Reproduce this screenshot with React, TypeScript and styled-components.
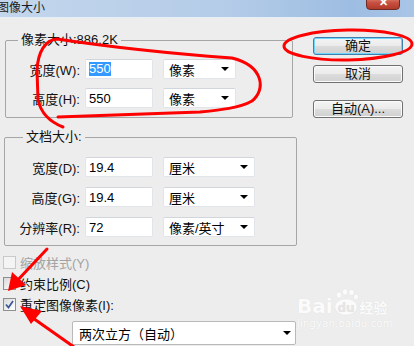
import React from "react";
import styled, { createGlobalStyle } from "styled-components";

const GlobalStyle = createGlobalStyle`
  html, body {
    margin: 0;
    padding: 0;
    background: #ededed;
  }
  body {
    font-family: "Liberation Sans", "Noto Sans CJK SC", sans-serif;
    font-size: 13px;
    color: #000;
  }
`;

const UI_FONT = `"Liberation Sans", "Noto Sans CJK SC", sans-serif`;

// Window frame
const Window = styled.div`
  position: relative;
  width: 414px;
  height: 346px;
  overflow: hidden;
  background: #ededed;
`;

const TitleBar = styled.div`
  position: relative;
  height: 17px;
  border-bottom: 1px solid #e6eef7;
  background: linear-gradient(to right, #c3d6ec 0%, #b4cce8 55%, #9dbde2 85%, #a9c5e6 100%);
  display: flex;
  align-items: center;
`;

const Title = styled.span`
  margin-left: -3px;
  font-family: ${UI_FONT};
  font-size: 12px;
  color: #1b1b1b;
  line-height: 17px;
`;

const CloseButton = styled.div`
  position: absolute;
  left: 366px;
  top: -6px;
  width: 34px;
  height: 16px;
  border: 1px solid #6e2a22;
  border-radius: 0 0 4px 4px;
  background: linear-gradient(#e9a294, #c8503f 55%, #b23a2a);
  color: #fff;
  font-size: 11px;
  font-weight: bold;
  display: flex;
  align-items: flex-end;
  justify-content: center;
  line-height: 11px;
  padding-bottom: 1px;
  box-sizing: border-box;
`;

const Body = styled.div`
  display: flex;
  flex-direction: row;
`;

const LeftCol = styled.div`
  width: 294px;
  padding-left: 3px;
  display: flex;
  flex-direction: column;
`;

const RightCol = styled.div`
  margin-left: 16px;
  padding-top: 19px;
  display: flex;
  flex-direction: column;
`;

// Group boxes
const Group = styled.div<{ $left: number; $width: number; $top: number; $padTop: number; $padBottom: number; $gap: number }>`
  position: relative;
  margin-left: ${({ $left }) => $left}px;
  margin-top: ${({ $top }) => $top}px;
  width: ${({ $width }) => $width}px;
  border: 1px solid #a6a6a6;
  border-radius: 2px;
  box-sizing: border-box;
  padding: ${({ $padTop }) => $padTop}px 0 ${({ $padBottom }) => $padBottom}px 0;
  display: flex;
  flex-direction: column;
  gap: ${({ $gap }) => $gap}px;
`;

const Legend = styled.span<{ $x: number }>`
  position: absolute;
  top: -9px;
  left: ${({ $x }) => $x}px;
  padding: 0 3px;
  background: #ededed;
  font-size: 13px;
  line-height: 16px;
  color: #111;
`;

const Row = styled.div`
  display: flex;
  align-items: center;
  height: 20px;
`;

const Label = styled.span<{ $width: number }>`
  width: ${({ $width }) => $width}px;
  text-align: right;
  margin-right: 5px;
  font-size: 13px;
  white-space: nowrap;
  color: #111;
`;

const TextBox = styled.div`
  width: 68px;
  height: 20px;
  box-sizing: border-box;
  background: #fff;
  border: 1px solid #e1e4e9;
  border-top-color: #d2d6dc;
  border-radius: 2px;
  padding-left: 3px;
  display: flex;
  align-items: center;
  font-size: 13px;
`;

const Selected = styled.span`
  background: #3399ff;
  color: #fff;
  line-height: 14px;
`;

const Select = styled.div<{ $width: number }>`
  margin-left: 10px;
  width: ${({ $width }) => $width}px;
  height: 20px;
  box-sizing: border-box;
  background: #fff;
  border: 1px solid #e1e4e9;
  border-top-color: #d2d6dc;
  border-radius: 2px;
  padding: 0 6px 0 5px;
  display: flex;
  align-items: center;
  justify-content: space-between;
  font-size: 13px;
`;

const Arrow = styled.span`
  width: 0;
  height: 0;
  border-left: 4px solid transparent;
  border-right: 4px solid transparent;
  border-top: 4px solid #000;
`;

// Checkboxes
const CheckRow = styled.div<{ $first?: boolean }>`
  display: flex;
  align-items: center;
  height: 21px;
  margin-top: ${({ $first }) => ($first ? 6 : 0)}px;
  gap: 4px;
`;

const Box = styled.div<{ $disabled?: boolean }>`
  width: 13px;
  height: 13px;
  box-sizing: border-box;
  border: 1px solid ${({ $disabled }) => ($disabled ? "#c9c9c9" : "#8e8f8f")};
  background: ${({ $disabled }) =>
    $disabled ? "#f4f4f4" : "linear-gradient(135deg, #d8d8d8, #f6f6f6 70%, #fff)"};
  display: flex;
  align-items: center;
  justify-content: center;
`;

const CheckText = styled.span<{ $disabled?: boolean }>`
  font-size: 13px;
  color: ${({ $disabled }) => ($disabled ? "#a3a3a3" : "#111")};
  white-space: nowrap;
`;

const ResampleSelect = styled(Select)`
  margin-left: 69px;
  margin-top: 6px;
  height: 24px;
  border-color: #b9b9b9;
  padding-left: 6px;
  padding-right: 4px;
`;

// Buttons
const Button = styled.div<{ $default?: boolean; $gap?: number }>`
  width: 90px;
  height: 18px;
  box-sizing: border-box;
  margin-bottom: ${({ $gap = 0 }) => $gap}px;
  border: 1px solid ${({ $default }) => ($default ? "#3c7fb1" : "#707070")};
  border-radius: 3px;
  background: linear-gradient(#f4f4f4 0%, #ebebeb 48%, #dcdcdc 52%, #d0d0d0 100%);
  box-shadow: ${({ $default }) => ($default ? "inset 0 0 0 1px #6fd5fb" : "inset 0 0 0 1px #fbfbfb")};
  display: flex;
  align-items: center;
  justify-content: center;
  font-size: 13px;
  color: #111;
  line-height: 16px;
`;

// Watermark and red marks lie over the dialog
const Watermark = styled.div`
  position: absolute;
  left: 297px;
  top: 292px;
  color: #fff;
  opacity: 0.8;
  text-shadow: 0 0 1px rgba(0, 0, 0, 0.1);
  display: flex;
  flex-direction: column;
  pointer-events: none;
`;

const MarkTop = styled.div`
  display: flex;
  align-items: flex-end;
  height: 24px;
`;

const BaiText = styled.span`
  font-family: "DejaVu Sans", sans-serif;
  font-weight: bold;
  font-size: 20px;
  line-height: 20px;
`;

const JingYan = styled.span`
  font-family: "Noto Sans CJK SC", sans-serif;
  font-size: 14px;
  font-weight: bold;
  line-height: 18px;
  margin-left: 1px;
`;

const MarkUrl = styled.span`
  font-family: "DejaVu Sans", sans-serif;
  font-size: 10px;
  letter-spacing: 0.2px;
  margin-top: 2px;
`;

const Overlay = styled.svg`
  position: absolute;
  left: 0;
  top: 0;
  pointer-events: none;
`;

const Paw = () => (
  <svg width="26" height="28" viewBox="0 0 26 28">
    <g fill="#fff" stroke="rgba(0,0,0,0.08)" strokeWidth="0.5">
      <ellipse cx="6" cy="7" rx="2.5" ry="3" />
      <ellipse cx="12" cy="4" rx="2.5" ry="3" />
      <ellipse cx="18.5" cy="4.5" rx="2.5" ry="3" />
      <ellipse cx="23" cy="9" rx="2.3" ry="2.8" />
      <ellipse cx="13" cy="19" rx="11" ry="8" />
    </g>
    <text x="13" y="23.5" textAnchor="middle" fontFamily="DejaVu Sans, sans-serif" fontSize="12" fontWeight="bold" fill="#e4e4e4">
      du
    </text>
  </svg>
);

const Check = () => (
  <svg width="9" height="9" viewBox="0 0 9 9">
    <path d="M1 4.5 L3.5 7.5 L8 1" fill="none" stroke="#3d5a98" strokeWidth="1.8" />
  </svg>
);

const pixelRows = [
  { label: "宽度(W):", value: "550", unit: "像素", selected: true },
  { label: "高度(H):", value: "550", unit: "像素", selected: false },
];

const docRows = [
  { label: "宽度(D):", value: "19.4", unit: "厘米" },
  { label: "高度(G):", value: "19.4", unit: "厘米" },
  { label: "分辨率(R):", value: "72", unit: "像素/英寸" },
];

export default function App() {
  return (
    <>
      <GlobalStyle />
      <Window>
        <TitleBar>
          <Title>图像大小</Title>
          <CloseButton>✕</CloseButton>
        </TitleBar>
        <Body>
          <LeftCol>
            <Group $left={2} $width={288} $top={22} $padTop={18} $padBottom={9} $gap={9}>
              <Legend $x={12}>像素大小:886.2K</Legend>
              {pixelRows.map((r) => (
                <Row key={r.label}>
                  <Label $width={74}>{r.label}</Label>
                  <TextBox>{r.selected ? <Selected>{r.value}</Selected> : r.value}</TextBox>
                  <Select $width={73}>
                    {r.unit}
                    <Arrow />
                  </Select>
                </Row>
              ))}
            </Group>
            <Group $left={1} $width={293} $top={19} $padTop={19} $padBottom={8} $gap={10}>
              <Legend $x={18}>文档大小:</Legend>
              {docRows.map((r) => (
                <Row key={r.label}>
                  <Label $width={75}>{r.label}</Label>
                  <TextBox>{r.value}</TextBox>
                  <Select $width={92}>
                    {r.unit}
                    <Arrow />
                  </Select>
                </Row>
              ))}
            </Group>
            <CheckRow $first>
              <Box $disabled />
              <CheckText $disabled>缩放样式(Y)</CheckText>
            </CheckRow>
            <CheckRow>
              <Box />
              <CheckText>约束比例(C)</CheckText>
            </CheckRow>
            <CheckRow>
              <Box>
                <Check />
              </Box>
              <CheckText>重定图像像素(I):</CheckText>
            </CheckRow>
            <ResampleSelect $width={224}>
              两次立方（自动）
              <Arrow />
            </ResampleSelect>
          </LeftCol>
          <RightCol>
            <Button $default $gap={10}>确定</Button>
            <Button $gap={17}>取消</Button>
            <Button>自动(A)...</Button>
          </RightCol>
        </Body>

        <Watermark>
          <MarkTop>
            <BaiText>Bai</BaiText>
            <Paw />
            <JingYan>经验</JingYan>
          </MarkTop>
          <MarkUrl>jingyan.baidu.com</MarkUrl>
        </Watermark>

        <Overlay width="414" height="346" viewBox="0 0 414 346">
          <g fill="none" stroke="#ff0000" strokeWidth="3" strokeLinecap="round" strokeLinejoin="round">
            <path d="M63 127 C50 122 41 113 38 100 L37 70 C38 52 45 40 57 39 C90 44 150 52 232 58 C264 66 266 90 252 101 C240 108 220 110 200 112 L58 117" />
            <ellipse cx="348" cy="45" rx="64" ry="15" transform="rotate(-1 348 45)" />
            <line x1="47" y1="249" x2="15" y2="283" />
            <line x1="74" y1="347" x2="30" y2="316" />
          </g>
          <g fill="#ff0000">
            <polygon points="8,291 12,272 26,285" />
            <polygon points="20,306 42,311 31,324" />
          </g>
        </Overlay>
      </Window>
    </>
  );
}
